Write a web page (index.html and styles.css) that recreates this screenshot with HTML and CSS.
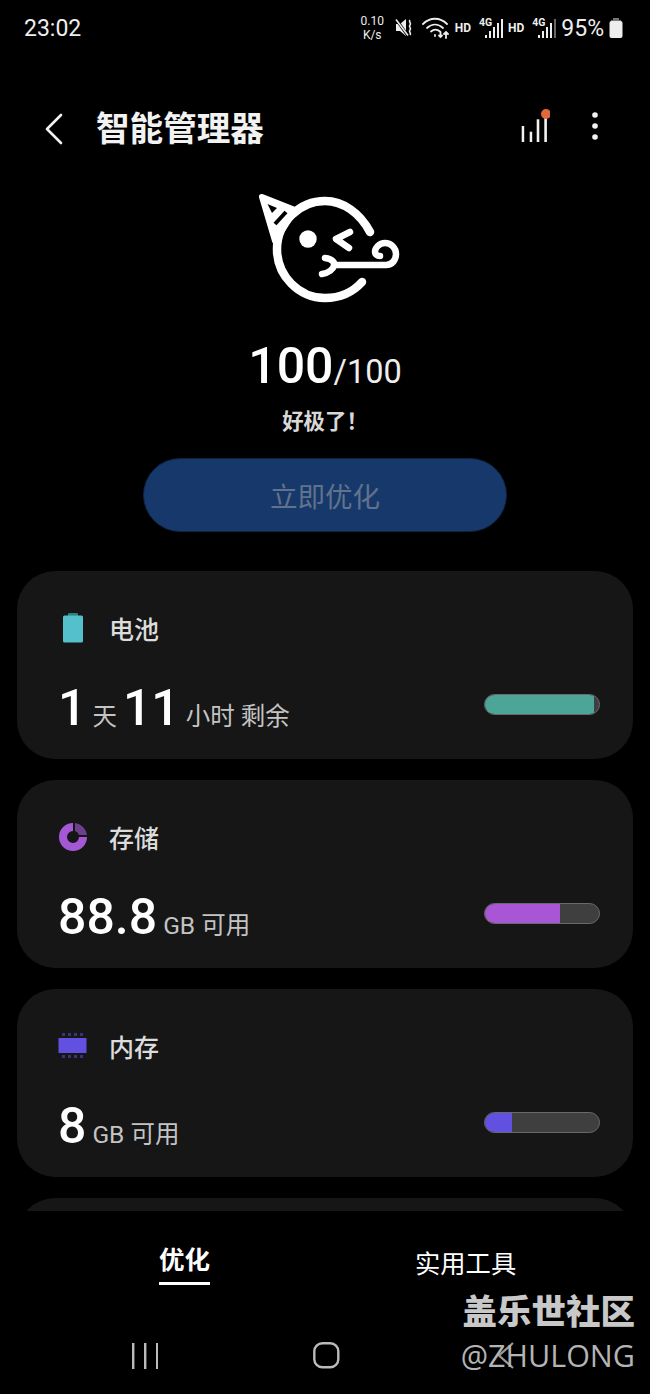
FILE: index.html
```html
<!DOCTYPE html>
<html lang="zh-CN">
<head>
    <meta charset="UTF-8">
    <meta name="viewport" content="width=device-width, initial-scale=1.0">
    <title>智能管理器</title>
    <link rel="stylesheet" href="styles.css">
</head>
<body>
    <div class="statusbar">
        <span class="clock">23:02</span>
        <div class="status-icons">
            <span class="speed">0.10<br>K/s</span>
            <svg class="mute" width="19" height="20" viewBox="0 0 19 20"><path d="M1 6h4l6-5v17l-6-5H1z" fill="#eee"/><path d="M1 1l12 17" stroke="#000" stroke-width="3"/><path d="M1 1.500l12 16" stroke="#eee" stroke-width="1.500"/><path d="M15 2c-2 2 2 3 0 5s2 3 0 5 2 3 0 5" fill="none" stroke="#eee" stroke-width="1.600"/></svg>
            <svg class="wifi" width="28" height="22" viewBox="0 0 28 22" fill="none" stroke="#eee" stroke-width="1.800" stroke-linecap="round"><path d="M1 7c7-7 17-7 24 0"/><path d="M5 11c5-4.500 11-4.500 16 0"/><path d="M9 14.500c3-2.500 6-2.500 9 0"/><path d="M13 18v1"/><path d="M24 21v-6M22 17l2-2 2 2"/><path d="M18.500 15v5M17 18.500l1.500 1.500 1.500-1.500"/></svg>
            <span class="hd">HD</span>
            <span class="sim">
                <span class="sim-label">4G</span>
                <svg width="18" height="20" viewBox="0 0 18 20" fill="#eee"><rect x="0" y="17" width="2" height="3"/><rect x="4" y="13" width="2" height="7"/><rect x="8" y="9" width="2" height="11"/><rect x="12" y="5" width="2" height="15"/><rect x="16" y="1" width="2" height="19"/></svg>
            </span>
            <span class="hd">HD</span>
            <span class="sim">
                <span class="sim-label">4G</span>
                <svg width="18" height="20" viewBox="0 0 18 20" fill="#eee"><rect x="0" y="17" width="2" height="3"/><rect x="4" y="13" width="2" height="7"/><rect x="8" y="9" width="2" height="11"/><rect x="12" y="5" width="2" height="15"/><rect x="16" y="1" width="2" height="19" fill="#666"/></svg>
            </span>
            <span class="percent">95%</span>
            <svg width="14" height="20" viewBox="0 0 14 20"><path d="M4 0h6v2H4z" fill="#777"/><path d="M2 2h10v2H2z" fill="#777"/><rect x="0.500" y="3" width="13" height="17" rx="2" fill="#eee"/></svg>
        </div>
    </div>

    <div class="topbar">
        <svg class="back" width="18" height="32" viewBox="0 0 18 32"><path d="M16 2L2 16l14 14" fill="none" stroke="#f2f2f2" stroke-width="2.600" stroke-linecap="round" stroke-linejoin="round"/></svg>
        <h1>智能管理器</h1>
        <div class="topbar-actions">
            <svg width="30" height="34" viewBox="0 0 30 34"><g fill="#f2f2f2"><rect x="1.700" y="17" width="2.500" height="16"/><rect x="9.700" y="22.700" width="2.500" height="10.300"/><rect x="16.700" y="10.300" width="2.600" height="22.700"/><rect x="24.300" y="9" width="2.600" height="24"/></g><circle cx="26" cy="5" r="5" fill="#e0683a"/></svg>
            <svg width="8" height="28" viewBox="0 0 8 28" fill="#f2f2f2"><circle cx="4" cy="3" r="2.800"/><circle cx="4" cy="14" r="2.800"/><circle cx="4" cy="25" r="2.800"/></svg>
        </div>
    </div>

    <div class="hero">
        <svg width="190" height="130" viewBox="0 0 190 130" fill="none" stroke="#fff" stroke-width="8.500" stroke-linecap="round" stroke-linejoin="round">
            <path d="M140 51C130 32 113 20 95 20 70 20 47 41 47 68c0 27 22 49 48 49 15 0 28-6 37-16"/>
            <path d="M32 16l33 13-20 31z" fill="#fff" stroke-width="6"/>
            <path d="M37.500 23l9.500 4-5 5z" fill="#000" stroke="none"/>
            <path d="M45 43l11-12" stroke="#000" stroke-width="4" stroke-linecap="butt"/>
            <circle cx="78" cy="58" r="8.700" fill="#fff" stroke="none"/>
            <path d="M120 51l-14 7 13 9" stroke-width="6.500"/>
            <path d="M95 77c8 1 10 5 9 8s-5 7-12 8" stroke-width="6.500"/>
            <path d="M104 84h52c6 0 10-5 10-11s-5-11-11-11-10 5-10 9c0 2 2 4 5 4" stroke-width="6.500"/>
        </svg>
        <div class="score"><b>100</b>/100</div>
        <div class="score-note">好极了！</div>
        <button class="optimize" disabled>立即优化</button>
    </div>

    <div class="cards">
        <section class="card">
            <div class="card-head">
                <svg class="card-icon" width="30" height="30" viewBox="0 0 30 30"><rect x="10" y="0" width="10" height="4" rx="1" fill="#2f7f86"/><rect x="5" y="2.500" width="20" height="27" rx="1.500" fill="#54c0cb"/></svg>
                <span class="card-title">电池</span>
            </div>
            <div class="card-body">
                <div class="value"><b>1</b><span class="unit">天</span><b>11</b><span class="unit">小时 剩余</span></div>
                <div class="bar"><div class="bar-fill battery" style="width: 96%"></div></div>
            </div>
        </section>
        <section class="card">
            <div class="card-head">
                <svg class="card-icon" width="30" height="30" viewBox="0 0 30 30"><path d="M15 1a14 14 0 1 0 14 14h-8a6 6 0 1 1-6-6z" fill="#a558d6"/><path d="M17 1a14 14 0 0 1 12 12h-8a6 6 0 0 0-4-4z" fill="#6d3f8c"/></svg>
                <span class="card-title">存储</span>
            </div>
            <div class="card-body">
                <div class="value"><b>88.8</b><span class="unit">GB 可用</span></div>
                <div class="bar"><div class="bar-fill storage" style="width: 66%"></div></div>
            </div>
        </section>
        <section class="card">
            <div class="card-head">
                <svg class="card-icon" width="30" height="30" viewBox="0 0 30 30"><rect x="0.500" y="7" width="28" height="15" fill="#6251e0"/><g fill="#3a3280"><rect x="4" y="2" width="3" height="3"/><rect x="10" y="2" width="3" height="3"/><rect x="16" y="2" width="3" height="3"/><rect x="22" y="2" width="3" height="3"/><rect x="4" y="24" width="3" height="3"/><rect x="10" y="24" width="3" height="3"/><rect x="16" y="24" width="3" height="3"/><rect x="22" y="24" width="3" height="3"/></g></svg>
                <span class="card-title">内存</span>
            </div>
            <div class="card-body">
                <div class="value"><b>8</b><span class="unit">GB 可用</span></div>
                <div class="bar"><div class="bar-fill memory" style="width: 24%"></div></div>
            </div>
        </section>
        <section class="card"></section>
    </div>

    <div class="tabs">
        <div class="tab active"><span>优化</span></div>
        <div class="tab"><span>实用工具</span></div>
    </div>

    <div class="navbar">
        <svg width="26" height="26" viewBox="0 0 26 26" fill="#bbb"><rect x="0" y="0" width="2.400" height="26"/><rect x="12" y="0" width="2.400" height="26"/><rect x="24" y="0" width="2.400" height="26"/></svg>
        <svg width="27" height="27" viewBox="0 0 27 27"><rect x="1.300" y="1.300" width="24" height="24" rx="8" fill="none" stroke="#bbb" stroke-width="2.400"/></svg>
        <svg width="18" height="27" viewBox="0 0 18 27"><path d="M16 1L2 13.500 16 26" fill="none" stroke="#999" stroke-width="2.200"/></svg>
    </div>

    <div class="watermark">
        <div class="wm-name">盖乐世社区</div>
        <div class="wm-user">@ZHULONG</div>
    </div>
</body>
</html>
```

FILE: styles.css
```css
* {
    box-sizing: border-box;
}
html, body {
    height: 100%;
}
body {
    margin: 0;
    position: relative;
    display: flex;
    flex-direction: column;
    height: 1394px;
    overflow: hidden;
    background-color: #000;
    color: #fff;
    font-family: Roboto, "Noto Sans CJK SC", sans-serif;
}

/* status bar */
.statusbar {
    display: flex;
    justify-content: space-between;
    align-items: center;
    height: 56px;
    padding: 0 27px 0 24px;
    flex-shrink: 0;
}
.clock {
    font-size: 23px;
    color: #eee;
}
.status-icons {
    display: flex;
    align-items: center;
    gap: 5px;
}
.speed {
    width: 27px;
    font-size: 12px;
    line-height: 14px;
    text-align: center;
    color: #eee;
}
.mute {
    margin-left: 4px;
}
.wifi {
    margin-left: 3px;
}
.hd {
    margin-right: 3px;
    font-size: 12px;
    font-weight: 700;
    color: #eee;
}
.sim {
    position: relative;
    width: 24px;
    height: 20px;
    display: flex;
    justify-content: flex-end;
}
.sim-label {
    position: absolute;
    left: 0;
    top: -2px;
    font-size: 10.500px;
    font-weight: 700;
    color: #eee;
}
.percent {
    font-size: 23px;
    color: #eee;
}

/* header */
.topbar {
    display: flex;
    align-items: center;
    height: 38px;
    margin-top: 54px;
    padding: 0 51px 0 45px;
    flex-shrink: 0;
}
.topbar h1 {
    margin: 2px 0 0 33px;
    font-size: 33.600px;
    font-weight: 700;
    line-height: 38px;
    color: #f2f2f2;
}
.back {
    flex-shrink: 0;
}
.topbar-actions {
    display: flex;
    align-items: center;
    gap: 41px;
    margin-left: auto;
    margin-bottom: 6px;
}

/* score area */
.hero {
    display: flex;
    flex-direction: column;
    align-items: center;
    margin-top: 33px;
    flex-shrink: 0;
}
.score {
    margin-top: 25px;
    font-size: 32.500px;
    line-height: 60px;
    color: #eee;
}
.score b {
    font-size: 50px;
    font-weight: 500;
    color: #fff;
}
.score-note {
    margin-top: 5px;
    font-size: 21.400px;
    font-weight: 700;
    line-height: 30px;
    color: #d8d8d8;
}
.optimize {
    width: 364px;
    height: 74px;
    margin-top: 21px;
    border: 1px solid #0d2342;
    border-radius: 37px;
    background-color: #17386a;
    color: #61738c;
    font-family: inherit;
    font-size: 27.500px;
}

/* cards */
.cards {
    display: flex;
    flex-direction: column;
    gap: 21px;
    height: 640px;
    margin-top: 39px;
    padding: 0 17px;
    overflow: hidden;
    flex-shrink: 0;
}
.card {
    flex: 0 0 188px;
    padding: 37px 33px 0 41px;
    border-radius: 38px;
    background-color: #161616;
}
.card-head {
    display: flex;
    align-items: center;
    height: 40px;
}
.card-icon {
    flex-shrink: 0;
}
.card-title {
    margin-left: 21px;
    font-size: 25px;
    font-weight: 500;
    color: #dcdcdc;
}
.card-body {
    display: flex;
    justify-content: space-between;
    align-items: center;
    margin-top: 27px;
}
.value {
    display: flex;
    align-items: baseline;
    height: 60px;
    padding-top: 3px;
    color: #c4c4c4;
}
.value b {
    font-size: 50px;
    font-weight: 500;
    line-height: 60px;
    color: #fff;
}
.unit {
    margin: 0 6px;
    font-size: 24.500px;
}
.bar {
    width: 116px;
    height: 21px;
    margin-bottom: 2px;
    border: 1px solid #6a6a6a;
    border-radius: 11px;
    background-color: #3f3f3f;
    overflow: hidden;
}
.bar-fill {
    height: 100%;
}
.battery {
    background-color: #4ba697;
}
.storage {
    background-color: #a855d6;
}
.memory {
    background-color: #6251e0;
}

/* tabs */
.tabs {
    display: grid;
    grid-template-columns: 370px 1fr;
    height: 80px;
    flex-shrink: 0;
}
.tab {
    display: flex;
    font-size: 25.300px;
    padding: 35px 0 0 45px;
}
.tab.active {
    justify-content: flex-end;
    padding: 30px 160px 0 0;
    font-size: 25.500px;
    font-weight: 700;
}
.tab span {
    height: 44px;
    line-height: 38px;
}
.tab.active span {
    border-bottom: 3px solid #fff;
}

/* nav bar */
.navbar {
    display: grid;
    grid-template-columns: 181px 184px 1fr;
    align-items: center;
    height: 27px;
    margin-top: 51px;
    padding-left: 132px;
    flex-shrink: 0;
}

.watermark {
    position: absolute;
    right: 15px;
    top: 1291px;
    text-align: right;
    color: #c8c8c8;
}
.wm-name {
    font-size: 34.500px;
    font-weight: 900;
    line-height: 42px;
}
.wm-user {
    margin-top: 2px;
    font-family: "Open Sans", sans-serif;
    font-size: 30.500px;
    line-height: 40px;
    color: #b4b4b4;
}
```
